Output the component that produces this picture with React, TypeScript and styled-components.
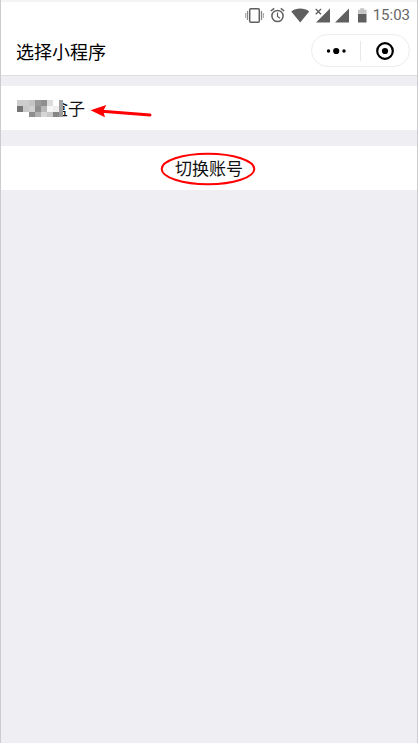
import React from "react";
import styled, { createGlobalStyle } from "styled-components";

const GlobalStyle = createGlobalStyle`
  *, *::before, *::after { box-sizing: border-box; }
  html, body, #root { height: 100%; }
  body {
    margin: 0;
    background: #eeeef3;
    color: #000;
    font-family: "Noto Sans CJK SC", "Noto Sans", sans-serif;
  }
  button { font: inherit; color: inherit; border: 0; padding: 0; background: none; }
`;

const Screen = styled.div`
  min-height: 100%;
  background: #eeeef3;
  border-left: 1px solid #cbcbd0;
  border-right: 1px solid #cbcbd0;
`;

const Header = styled.header`
  background: #fff;
  border-top: 2px solid #f4f4f4;
  border-bottom: 1px solid #dededf;
`;

const StatusBar = styled.div`
  display: flex;
  justify-content: flex-end;
  align-items: center;
  height: 26px;
  padding-right: 7px;
`;

const StatusIcons = styled.svg`
  display: block;
  width: 124px;
  height: 18px;
  margin-right: 4px;
`;

const Clock = styled.time`
  font: 15px/18px Roboto, sans-serif;
  color: #666;
`;

const NavBar = styled.div`
  display: flex;
  align-items: center;
  justify-content: space-between;
  height: 47px;
  padding: 0 7px 2px 15px;
`;

const Title = styled.h1`
  margin: 0;
  font-size: 18px;
  font-weight: 400;
  line-height: 26px;
`;

const Capsule = styled.div`
  display: flex;
  align-items: center;
  width: 99px;
  height: 33px;
  border: 1px solid #ececec;
  border-radius: 17px;
`;

const CapsuleButton = styled.button`
  flex: 1;
  display: flex;
  align-items: center;
  justify-content: center;
  height: 100%;
`;

const Divider = styled.span`
  width: 1px;
  height: 20px;
  background: #e8e8e8;
`;

const List = styled.main`
  display: flex;
  flex-direction: column;
  gap: 16px;
  padding-top: 10px;
`;

const Row = styled.button<{ $centered?: boolean }>`
  display: flex;
  align-items: center;
  justify-content: ${(p) => (p.$centered ? "center" : "flex-start")};
  height: 44px;
  padding: 0 16px;
  background: #fff;
  color: #111;
  font-size: 17px;
  line-height: 24px;
`;

const AppName = styled.span`
  position: relative;
  padding-left: 34px;
`;

const Mosaic = styled.svg`
  position: absolute;
  left: 0;
  top: 4px;
`;

const Arrow = styled.svg`
  margin-left: 4px;
`;

const Circled = styled.span`
  position: relative;
`;

const Ring = styled.svg`
  position: absolute;
  left: -15px;
  top: -4px;
`;

const CELL = 6;
const MOSAIC_WIDTH = 46;
const MOSAIC_HEIGHT = 17;
const mosaicRows = [
  ["#cdcdcd", "#cdcdcd", "#c4c4c4", "#9a9a9a", "#8f8f8f", "#dcdcdc", "#ffffff", "#a2a2a2"],
  ["#747474", "#c9c9c9", "#d2d2d2", "#8f8f8f", "#b9b9b9", "#f6f6f6", "#eeeeee", "#a2a2a2"],
  ["#ffffff", "#ffffff", "#8d8d8d", "#b0b0b0", "#d6d6d6", "#c8c8c8", "#868686", "#9c9c9c"],
];

export default function App() {
  return (
    <>
      <GlobalStyle />
      <Screen>
        <Header>
          <StatusBar>
            <StatusIcons viewBox="245 5 124 18" aria-hidden="true">
              <g fill="none" stroke="#5f5f5f">
                <rect x="249.7" y="7.7" width="9.6" height="13.6" rx="1" strokeWidth="1.5" />
                <path d="M247.5 10v9M261.5 10v9" strokeWidth="1.2" stroke="#888" />
                <path d="M245.7 12v5M263.3 12v5" strokeWidth="1" stroke="#999" />
                <circle cx="277.5" cy="15" r="5.6" strokeWidth="1.5" />
                <path d="M277.5 11.5v4l2.5 1.8" strokeWidth="1.2" />
                <path d="M270.8 10l3.4-2.7M284.2 10l-3.4-2.7" strokeWidth="1.5" />
                <path d="M315.7 8l5.3 5.3M321 8l-5.3 5.3" strokeWidth="1.3" />
              </g>
              <g fill="#5f5f5f">
                <path d="M291.3 10.4C296.5 6.6 304 6.6 309.2 10.4L300.2 21.5Z" />
                <path d="M330 7.5V21.5H316L323 14.5Z" />
                <path d="M349 7.5V21.5H335Z" />
                <path d="M358 12.8h8.5v8.7h-8.5z" />
              </g>
              <path d="M358 12.8V8.8h2.2V7.3h4v1.5h2.3v4z" fill="#c4c4c4" />
            </StatusIcons>
            <Clock>15:03</Clock>
          </StatusBar>
          <NavBar>
            <Title>选择小程序</Title>
            <Capsule>
              <CapsuleButton aria-label="更多">
                <svg width="20" height="8" viewBox="0 0 20 8">
                  <circle cx="2.5" cy="4" r="1.7" />
                  <circle cx="10.2" cy="4" r="3.1" />
                  <circle cx="18" cy="4" r="1.7" />
                </svg>
              </CapsuleButton>
              <Divider />
              <CapsuleButton aria-label="关闭">
                <svg width="18" height="18" viewBox="0 0 18 18">
                  <circle cx="9" cy="9" r="7.8" fill="none" stroke="#000" strokeWidth="2.2" />
                  <circle cx="9" cy="9" r="3.1" />
                </svg>
              </CapsuleButton>
            </Capsule>
          </NavBar>
        </Header>
        <List>
          <Row>
            <AppName>
              盒子
              <Mosaic width={MOSAIC_WIDTH} height={MOSAIC_HEIGHT} shapeRendering="crispEdges" aria-hidden="true">
                {mosaicRows.map((row, y) =>
                  row.map((fill, x) => (
                    <rect key={`${x}-${y}`} x={x * CELL} y={y * CELL} width={CELL} height={CELL} fill={fill} />
                  )),
                )}
              </Mosaic>
            </AppName>
            <Arrow width="64" height="24" viewBox="89 96 64 24" aria-hidden="true">
              <path d="M102 111.2L150 115" stroke="#f00" strokeWidth="3" strokeLinecap="round" />
              <path d="M90.5 110.2L106.3 105L103.2 111L105 117.3Z" fill="#f00" />
            </Arrow>
          </Row>
          <Row $centered>
            <Circled>
              切换账号
              <Ring width="96" height="34" viewBox="0 0 96 34" aria-hidden="true">
                <ellipse cx="48" cy="17" rx="46.3" ry="15.3" fill="none" stroke="#f00" strokeWidth="2" />
              </Ring>
            </Circled>
          </Row>
        </List>
      </Screen>
    </>
  );
}
